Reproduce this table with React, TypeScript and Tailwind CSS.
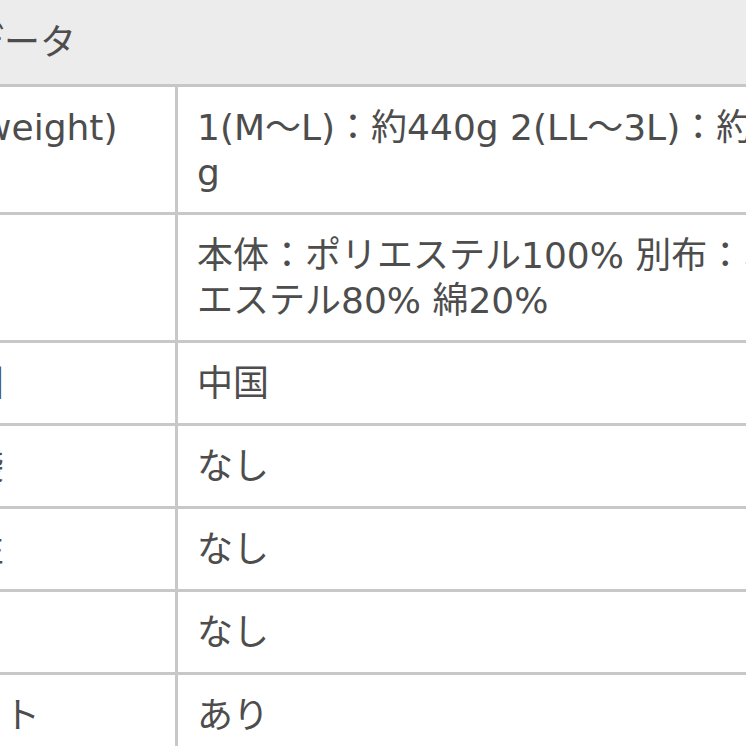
const rows: { label: string; value: string[]; }[] = [
  { label: '重量(weight)', value: ['1(M〜L)：約440g 2(LL〜3L)：約480', 'g'] },
  { label: '素材', value: ['本体：ポリエステル100% 別布：ポリ', 'エステル80% 綿20%'] },
  { label: '生産国', value: ['中国'] },
  { label: '収納袋', value: ['なし'] },
  { label: '伸縮性', value: ['なし'] },
  { label: '裏地', value: ['なし'] },
  { label: 'ポケット', value: ['あり'] },
];

export default function App() {
  return (
    <div
      className="w-[746px] h-[746px] overflow-hidden bg-white text-[#4d4d4d] text-[36px] leading-[45px]"
      style={{ fontFamily: '"DejaVu Sans", "Noto Sans CJK JP", sans-serif' }}
    >
      <div className="ml-[-123px] w-[1200px]">
        {/* header */}
        <div className="h-[87px] bg-[#ececec] border-b-[3px] border-[#c6c6c6] flex items-center pl-[19px] whitespace-nowrap">
          商品データ
        </div>

        {rows.map((r) => (
          <div key={r.label} className="grid grid-cols-[301px_1fr] border-b-[3px] border-[#c8c8c8]">
            <div className="border-r-[3px] border-[#c8c8c8] px-[19px] py-[17.5px] whitespace-nowrap">
              {r.label}
            </div>
            <div className="px-[19px] py-[17.5px] whitespace-nowrap">
              {r.value.map((line, i) => (
                <div key={i}>{line}</div>
              ))}
            </div>
          </div>
        ))}
      </div>
    </div>
  );
}
